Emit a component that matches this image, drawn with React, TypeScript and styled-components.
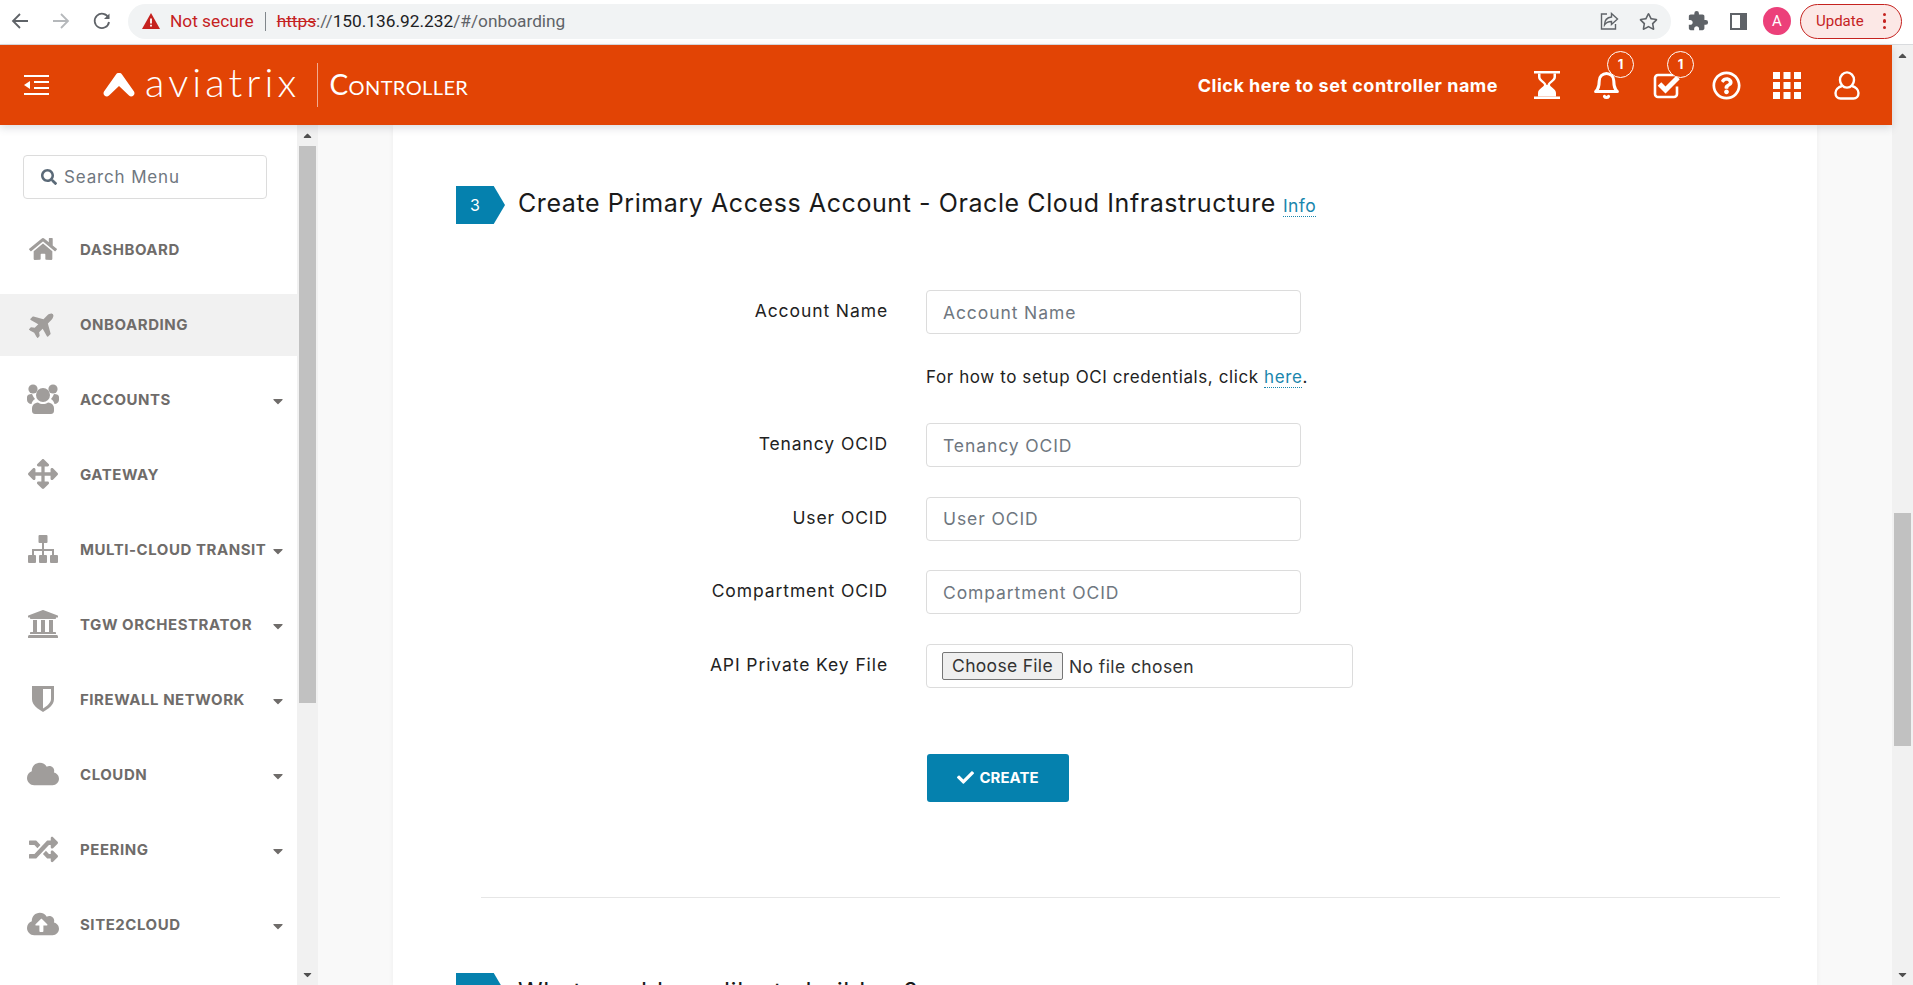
import React from "react";
import styled, { createGlobalStyle } from "styled-components";
import {
  FaHome,
  FaPlane,
  FaArrowsAlt,
  FaUniversity,
  FaCloud,
  FaRandom,
  FaCloudUploadAlt,
  FaCheck,
  FaSearch,
  FaRegQuestionCircle,
  FaRegStar,
  FaCaretDown,
  FaCaretUp,
} from "react-icons/fa";
import { FiBell } from "react-icons/fi";
import { MdExtension } from "react-icons/md";

const GlobalStyle = createGlobalStyle`
  html, body {
    margin: 0;
    padding: 0;
    height: 100%;
    overflow: hidden;
    background: #fff;
  }
  * { box-sizing: border-box; }
`;

const Page = styled.div`
  width: 1913px;
  height: 985px;
  display: flex;
  flex-direction: column;
  overflow: hidden;
  font-family: Inter, "Liberation Sans", sans-serif;
`;

/* browser chrome */
const BrowserBar = styled.div`
  height: 45px;
  flex: none;
  display: flex;
  align-items: center;
  background: #fff;
  border-bottom: 1px solid #d9dbde;
  padding-bottom: 2px;
`;

const NavButton = styled.span<{ $w: number }>`
  width: ${(p) => p.$w}px;
  flex: none;
  display: flex;
  justify-content: center;
  align-items: center;
`;

const Omnibox = styled.div`
  width: 1543px;
  height: 35px;
  margin-left: 6px;
  flex: none;
  background: #f1f3f4;
  border-radius: 18px;
  display: flex;
  align-items: center;
  padding-left: 14px;
  font-family: Roboto, "Liberation Sans", sans-serif;
  font-size: 17.3px;
  color: #5f6368;
`;

const NotSecure = styled.span`
  color: #c5221f;
  margin-left: 10px;
`;

const UrlSep = styled.span`
  width: 1px;
  height: 19px;
  background: #80868b;
  margin: 0 11px;
`;

const Strike = styled.span`
  color: #c5221f;
  text-decoration: line-through;
`;

const Host = styled.span`
  color: #202124;
`;

const OmniIcons = styled.div`
  margin-left: auto;
  display: flex;
  align-items: center;
  gap: 20px;
  padding-right: 13px;
`;

const Avatar = styled.span`
  width: 28px;
  height: 28px;
  flex: none;
  margin-left: 11px;
  border-radius: 50%;
  background: #ec407a;
  color: #fff;
  font-family: Roboto, sans-serif;
  font-size: 15px;
  display: flex;
  align-items: center;
  justify-content: center;
`;

const UpdateButton = styled.div`
  width: 102px;
  height: 35px;
  flex: none;
  margin-left: 9px;
  border: 1px solid #c5221f;
  border-radius: 18px;
  background: #fce8e6;
  color: #c5221f;
  font-family: Roboto, sans-serif;
  font-size: 15px;
  display: flex;
  align-items: center;
  padding: 0 15px;
  justify-content: space-between;
`;

const Dots = styled.span`
  display: flex;
  flex-direction: column;
  gap: 3px;
  i {
    width: 3.5px;
    height: 3.5px;
    border-radius: 50%;
    background: #c5221f;
  }
`;

/* app */
const Workspace = styled.div`
  flex: 1;
  min-height: 0;
  display: flex;
`;

const AppColumn = styled.div`
  width: 1892px;
  display: flex;
  flex-direction: column;
`;

const Header = styled.header`
  height: 80px;
  flex: none;
  background: #e24405;
  color: #fff;
  display: flex;
  align-items: center;
  padding-left: 24px;
  position: relative;
  z-index: 2;
  box-shadow: 0 3px 8px rgba(60, 70, 90, 0.18);
`;

const LogoMark = styled.svg`
  margin-left: 54px;
  flex: none;
`;

const LogoText = styled.span`
  font-family: Lato, sans-serif;
  font-weight: 300;
  font-size: 40px;
  letter-spacing: 4.1px;
  margin-left: 10px;
  line-height: 1;
  padding-bottom: 7px;
`;

const LogoDivider = styled.span`
  width: 1px;
  height: 44px;
  background: rgba(255, 255, 255, 0.55);
  margin: 0 11px 0 17px;
`;

const ProductName = styled.span`
  font-family: Lato, sans-serif;
  font-size: 28px;
  font-variant: small-caps;
  letter-spacing: 0.4px;
  padding-bottom: 2px;
`;

const ControllerName = styled.span`
  margin-left: auto;
  font-size: 18px;
  font-weight: 700;
  letter-spacing: 0.5px;
`;

const HeaderIcons = styled.div`
  display: flex;
  align-items: center;
  margin-left: 34px;
  padding-right: 31px;
  gap: 31px;
`;

const HeaderIcon = styled.span`
  position: relative;
  width: 29px;
  height: 29px;
  display: flex;
  align-items: center;
  justify-content: center;
`;

const CountBadge = styled.span`
  position: absolute;
  top: -20px;
  right: -13px;
  width: 27px;
  height: 27px;
  border: 1px solid #fff;
  border-radius: 50%;
  background: #e24405;
  font-size: 13px;
  font-weight: 700;
  display: flex;
  align-items: center;
  justify-content: center;
`;

const Body = styled.div`
  flex: 1;
  min-height: 0;
  display: flex;
`;

const Sidebar = styled.aside`
  width: 297px;
  flex: none;
  background: #fff;
  padding-top: 30px;
  overflow: hidden;
`;

const SearchBox = styled.div`
  width: 244px;
  height: 44px;
  margin-left: 23px;
  border: 1px solid #dcdcdc;
  border-radius: 4px;
  display: flex;
  align-items: center;
  gap: 7px;
  padding: 0 0 1px 17px;
  color: #6f7780;
  font-size: 17px;
  letter-spacing: 0.85px;
`;

const NavList = styled.nav`
  margin-top: 20px;
  display: flex;
  flex-direction: column;
  gap: 13px;
`;

const NavItem = styled.div<{ $active?: boolean }>`
  height: 62px;
  position: relative;
  display: flex;
  align-items: center;
  background: ${(p) => (p.$active ? "#f1f1f1" : "transparent")};
  color: #6f6c6a;
  font-size: 15px;
  font-weight: 700;
  letter-spacing: 0.55px;
  padding-bottom: 2px;
`;

const NavIcon = styled.span`
  width: 34px;
  margin-left: 26px;
  margin-right: 20px;
  flex: none;
  display: flex;
  justify-content: center;
  color: #a09d9b;
`;

const NavCaret = styled(FaCaretDown)`
  position: absolute;
  left: 270px;
  top: 24px;
  color: #6f6c6a;
`;

const Track = styled.div<{ $w: number }>`
  width: ${(p) => p.$w}px;
  flex: none;
  background: #f1f1f1;
  display: flex;
  flex-direction: column;
  align-items: center;
  color: #505050;
`;

const TrackSpacer = styled.div<{ $h: number }>`
  height: ${(p) => p.$h}px;
  flex: none;
  display: flex;
  align-items: center;
  justify-content: center;
`;

const Thumb = styled.div<{ $h: number; $w: number }>`
  width: ${(p) => p.$w}px;
  height: ${(p) => p.$h}px;
  flex: none;
  background: #c1c1c1;
`;

const Main = styled.main`
  flex: 1;
  min-width: 0;
  background: #f9f9f9;
  padding: 0 75px;
  overflow: hidden;
`;

const Card = styled.section`
  height: 100%;
  background: #fff;
  padding: 59px 37px 0 63px;
  box-shadow: 0 0 6px rgba(0, 0, 0, 0.05);
  overflow: hidden;
`;

const StepTitle = styled.div`
  display: flex;
  align-items: center;
  gap: 13px;
`;

const StepBadge = styled.span`
  width: 49px;
  height: 38px;
  flex: none;
  padding-right: 11px;
  background: #0581ae;
  clip-path: polygon(0 0, 77% 0, 100% 50%, 77% 100%, 0 100%);
  color: #fff;
  font-size: 16px;
  display: flex;
  align-items: center;
  justify-content: center;
`;

const StepText = styled.h2`
  margin: 0;
  font-size: 25px;
  font-weight: 400;
  letter-spacing: 0.58px;
  color: #1a1a1a;
  line-height: 38px;
  padding-bottom: 1px;
`;

const InfoLink = styled.a`
  margin-left: 7px;
  font-size: 17.5px;
  letter-spacing: 0.4px;
  color: #1a86ad;
  border-bottom: 1px dotted #1a86ad;
`;

const Form = styled.form`
  margin-top: 64px;
  display: flex;
  flex-direction: column;
`;

const Row = styled.div<{ $gap: number }>`
  display: flex;
  align-items: center;
  margin-bottom: ${(p) => p.$gap}px;
`;

const FieldLabel = styled.label`
  width: 432px;
  margin-right: 38px;
  flex: none;
  text-align: right;
  font-size: 17.5px;
  color: #222;
  padding-bottom: 3px;
  letter-spacing: 0.9px;
`;

const TextInput = styled.input`
  width: 375px;
  height: 44px;
  border: 1px solid #dcdcdc;
  border-radius: 4px;
  padding: 0 16px;
  font-family: inherit;
  font-size: 17.5px;
  letter-spacing: 0.9px;
  outline: none;
  &::placeholder {
    color: #6f7780;
    opacity: 1;
  }
`;

const HelpText = styled.p`
  margin: 0 0 33px 470px;
  font-size: 17px;
  letter-spacing: 0.6px;
  line-height: 25px;
  color: #222;
`;

const HelpLink = styled.a`
  color: #1a86ad;
  border-bottom: 1px dotted #1a86ad;
`;

const FileField = styled.div`
  width: 427px;
  height: 44px;
  border: 1px solid #dcdcdc;
  border-radius: 4px;
  padding-left: 15px;
  display: flex;
  align-items: center;
`;

const FileInput = styled.input`
  font-family: inherit;
  font-size: 17.5px;
  letter-spacing: 0.4px;
  color: #333;
  width: 400px;
  &::file-selector-button {
    font-family: inherit;
    font-size: 17.5px;
    letter-spacing: 0.3px;
    width: 121px;
    height: 28px;
    margin-right: 6px;
    padding: 0;
    color: #333;
    background: #efefef;
    border: 1px solid #767676;
    border-radius: 2px;
  }
`;

const CreateButton = styled.button`
  width: 142px;
  height: 48px;
  margin-left: 471px;
  border: 0;
  border-radius: 3px;
  background: #0581ae;
  color: #fff;
  font-family: inherit;
  font-size: 15px;
  font-weight: 700;
  display: flex;
  align-items: center;
  justify-content: center;
  gap: 5px;
`;

const Rule = styled.hr`
  margin: 95px 0 75px 25px;
  border: 0;
  border-top: 1px solid #e6e6e6;
`;

const UsersIcon = () => (
  <svg width="32" height="30" viewBox="0 0 32 30" fill="currentColor">
    <circle cx="6" cy="5" r="4.6" />
    <circle cx="26" cy="5" r="4.6" />
    <path d="M0 13c0-2 2-3 5-3 1 2 2 4 3 5-2 1-3 3-3.500 5C2 20 0 18 0 16zM32 13c0-2-2-3-5-3-1 2-2 4-3 5 2 1 3 3 3.500 5 2.500 0 4.500-2 4.500-4z" />
    <circle cx="16" cy="11" r="7" />
    <path d="M11 18.500c3 2 7 2 10 0 4 .5 6 3 6 6V27c0 2-1.500 3-3 3H8c-1.500 0-3-1-3-3v-2.500c0-3 2-5.500 6-6z" />
  </svg>
);

const SitemapIcon = () => (
  <svg width="30" height="28" viewBox="0 0 30 28" fill="currentColor">
    <rect x="10.500" y="0" width="9" height="8" rx="1" />
    <rect x="14" y="8" width="2" height="12" />
    <path d="M4 20v-6h22v6h-2v-4H6v4z" />
    <rect x="0" y="20" width="8" height="8" rx="1" />
    <rect x="11" y="20" width="8" height="8" rx="1" />
    <rect x="22" y="20" width="8" height="8" rx="1" />
  </svg>
);

const ShieldIcon = () => (
  <svg width="22" height="26" viewBox="0 0 22 26">
    <path d="M0 0h22v13c0 6-6 10-11 13C6 23 0 19 0 13z" fill="currentColor" />
    <path d="M11 3h8v10c0 4-4 7-8 9.500z" fill="#fff" />
  </svg>
);

const HourglassIcon = () => (
  <svg width="26" height="28" viewBox="0 0 26 28" fill="#fff">
    <path d="M0 0h26v2.500H0zM0 25.500h26V28H0z" />
    <path d="M4 2.500V6c0 4 6 6 6 8s-6 4-6 8v3.500h18V22c0-4-6-6-6-8s6-4 6-8V2.500h-2.500V6c0 3-6 5-6 8h-1c0-3-6-5-6-8V2.500z" />
    <path d="M13 15.500c-1 3-6 4-7.500 8.500h15c-1.500-4.500-6.500-5.500-7.500-8.500z" />
  </svg>
);

const CheckSquareIcon = () => (
  <svg width="28" height="27" viewBox="0 0 28 27">
    <path d="M24 14.500V22a3 3 0 0 1-3 3H5a3 3 0 0 1-3-3V6a3 3 0 0 1 3-3h16" fill="none" stroke="#fff" strokeWidth="2.600" />
    <path d="M6.500 12l6 6L25 5.500" fill="none" stroke="#fff" strokeWidth="5" />
  </svg>
);

const GridIcon = () => (
  <svg width="28" height="27" viewBox="0 0 28 27" fill="#fff">
    {[0, 10, 20].map((y) =>
      [0, 10.5, 21].map((x) => <rect key={`${x}-${y}`} x={x} y={y} width="7" height="7" />)
    )}
  </svg>
);

const NAV = [
  { label: "DASHBOARD", icon: <FaHome size={28} /> },
  { label: "ONBOARDING", icon: <FaPlane size={28} style={{ transform: "rotate(-45deg)" }} />, active: true },
  { label: "ACCOUNTS", icon: <UsersIcon />, caret: true },
  { label: "GATEWAY", icon: <FaArrowsAlt size={30} /> },
  { label: "MULTI-CLOUD TRANSIT", icon: <SitemapIcon />, caret: true },
  { label: "TGW ORCHESTRATOR", icon: <FaUniversity size={32} />, caret: true },
  { label: "FIREWALL NETWORK", icon: <ShieldIcon />, caret: true },
  { label: "CLOUDN", icon: <FaCloud size={32} />, caret: true },
  { label: "PEERING", icon: <FaRandom size={29} />, caret: true },
  { label: "SITE2CLOUD", icon: <FaCloudUploadAlt size={32} />, caret: true },
];

const FIELDS = ["Tenancy OCID", "User OCID", "Compartment OCID"];

export default function App() {
  return (
    <Page>
      <GlobalStyle />
      <BrowserBar>
        <NavButton $w={40}>
          <svg width="18" height="18" viewBox="0 0 18 18" fill="none" stroke="#5f6368" strokeWidth="1.8">
            <path d="M17 9H2M9 2L2 9l7 7" />
          </svg>
        </NavButton>
        <NavButton $w={41}>
          <svg width="18" height="18" viewBox="0 0 18 18" fill="none" stroke="#b5b8bb" strokeWidth="1.8">
            <path d="M1 9h15M9 2l7 7-7 7" />
          </svg>
        </NavButton>
        <NavButton $w={41}>
          <svg width="18" height="18" viewBox="0 0 18 18" fill="none" stroke="#5f6368" strokeWidth="1.8">
            <path d="M15.500 6A7.200 7.200 0 1 0 16 10" />
            <path d="M16.500 1.500v5.500h-5.500" fill="#5f6368" stroke="none" />
          </svg>
        </NavButton>
        <Omnibox>
          <svg width="18" height="16" viewBox="0 0 18 16">
            <path d="M9 0l9 16H0z" fill="#c5221f" />
            <path d="M8.100 5.500h1.800v5H8.100zM8.100 11.700h1.800v1.800H8.100z" fill="#fff" />
          </svg>
          <NotSecure>Not secure</NotSecure>
          <UrlSep />
          <Strike>https</Strike>
          <span>://</span>
          <Host>150.136.92.232</Host>
          <span>/#/onboarding</span>
          <OmniIcons>
            <svg width="20" height="20" viewBox="0 0 20 20" fill="none" stroke="#5f6368" strokeWidth="1.400">
              <path d="M8 3H2.500v15h14v-5" />
              <path d="M12.500 2.500L18.500 8l-6 5.500V10.500c-3.500 0-5.500 1-7 3.500 0-4.500 2.500-7.500 7-8z" />
            </svg>
            <FaRegStar size={19} color="#5f6368" />
          </OmniIcons>
        </Omnibox>
        <NavButton $w={53}>
          <MdExtension size={22} color="#5f6368" />
        </NavButton>
        <NavButton $w={28}>
          <svg width="17" height="17" viewBox="0 0 17 17">
            <path d="M0 0h17v17H0zM2 2v13h8V2z" fill="#5f6368" fillRule="evenodd" />
          </svg>
        </NavButton>
        <Avatar>A</Avatar>
        <UpdateButton>
          Update
          <Dots>
            <i />
            <i />
            <i />
          </Dots>
        </UpdateButton>
      </BrowserBar>
      <Workspace>
        <AppColumn>
          <Header>
            <svg width="25" height="20" viewBox="0 0 25 20" fill="#fff">
              <path d="M0 0h25v2H0zM10 6h15v2H10zM10 12h15v2H10zM0 18h25v2H0zM6 6v8L0 10z" />
            </svg>
            <LogoMark width="32" height="24" viewBox="0 0 32 24" fill="#fff">
              <path d="M13 1.500a3.500 3.500 0 0 1 6 0L31 18.500c2 3.500-2.500 6.500-5 4L16 13 6 22.500c-2.500 2.500-7-.5-5-4z" />
            </LogoMark>
            <LogoText>aviatrix</LogoText>
            <LogoDivider />
            <ProductName>Controller</ProductName>
            <ControllerName>Click here to set controller name</ControllerName>
            <HeaderIcons>
              <HeaderIcon>
                <HourglassIcon />
              </HeaderIcon>
              <HeaderIcon>
                <FiBell size={31} strokeWidth={2.500} />
                <CountBadge>1</CountBadge>
              </HeaderIcon>
              <HeaderIcon>
                <CheckSquareIcon />
                <CountBadge>1</CountBadge>
              </HeaderIcon>
              <HeaderIcon>
                <FaRegQuestionCircle size={29} />
              </HeaderIcon>
              <HeaderIcon>
                <GridIcon />
              </HeaderIcon>
              <HeaderIcon>
                <svg width="26" height="29" viewBox="0 0 26 29" fill="none" stroke="#fff" strokeWidth="2.400">
                  <ellipse cx="13" cy="9" rx="7" ry="7.600" />
                  <path d="M8 15c-4 1-6.500 4-6.500 7 0 3 2 5.500 5 5.500h13c3 0 5-2.500 5-5.500 0-3-2.500-6-6.500-7" />
                </svg>
              </HeaderIcon>
            </HeaderIcons>
          </Header>
          <Body>
            <Sidebar>
              <SearchBox>
                <FaSearch size={16} color="#5b6a78" />
                Search Menu
              </SearchBox>
              <NavList>
                {NAV.map((n) => (
                  <NavItem key={n.label} $active={n.active}>
                    <NavIcon>{n.icon}</NavIcon>
                    {n.label}
                    {n.caret && <NavCaret size={16} />}
                  </NavItem>
                ))}
              </NavList>
            </Sidebar>
            <Track $w={21}>
              <TrackSpacer $h={21}>
                <FaCaretUp size={13} />
              </TrackSpacer>
              <Thumb $w={17} $h={557} />
              <TrackSpacer $h={261} />
              <TrackSpacer $h={21}>
                <FaCaretDown size={13} />
              </TrackSpacer>
            </Track>
            <Main>
              <Card>
                <StepTitle>
                  <StepBadge>3</StepBadge>
                  <StepText>
                    Create Primary Access Account - Oracle Cloud Infrastructure
                    <InfoLink>Info</InfoLink>
                  </StepText>
                </StepTitle>
                <Form>
                  <Row $gap={31}>
                    <FieldLabel>Account Name</FieldLabel>
                    <TextInput placeholder="Account Name" />
                  </Row>
                  <HelpText>
                    For how to setup OCI credentials, click <HelpLink>here</HelpLink>.
                  </HelpText>
                  {FIELDS.map((f) => (
                    <Row $gap={29.5} key={f}>
                      <FieldLabel>{f}</FieldLabel>
                      <TextInput placeholder={f} />
                    </Row>
                  ))}
                  <Row $gap={66}>
                    <FieldLabel>API Private Key File</FieldLabel>
                    <FileField>
                      <FileInput type="file" />
                    </FileField>
                  </Row>
                  <CreateButton type="button">
                    <FaCheck size={17} />
                    CREATE
                  </CreateButton>
                </Form>
                <Rule />
                <StepTitle>
                  <StepBadge>4</StepBadge>
                  <StepText>What would you like to build on?</StepText>
                </StepTitle>
              </Card>
            </Main>
          </Body>
        </AppColumn>
        <Track $w={21}>
          <TrackSpacer $h={21}>
            <FaCaretUp size={13} />
          </TrackSpacer>
          <TrackSpacer $h={447} />
          <Thumb $w={17} $h={233} />
          <TrackSpacer $h={218} />
          <TrackSpacer $h={21}>
            <FaCaretDown size={13} />
          </TrackSpacer>
        </Track>
      </Workspace>
    </Page>
  );
}
